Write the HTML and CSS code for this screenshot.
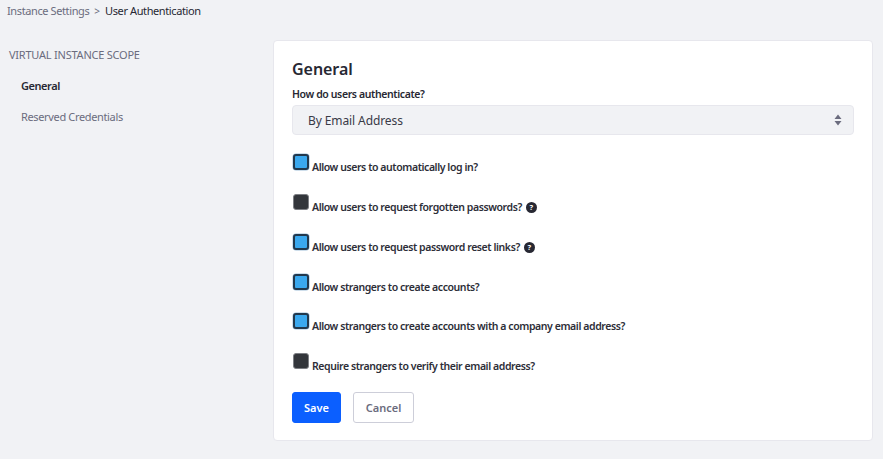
FILE: index.html
```html
<!DOCTYPE html>
<html lang="en">
<head>
<meta charset="utf-8">
<title>User Authentication</title>
<link rel="stylesheet" href="styles.css">
</head>
<body>
<nav class="crumbs"><span class="crumb-link">Instance Settings</span><span class="crumb-sep">&gt;</span><span class="crumb-current">User Authentication</span></nav>
<div class="layout">
  <aside class="side">
    <div class="side-title">VIRTUAL INSTANCE SCOPE</div>
    <a class="side-item active">General</a>
    <a class="side-item">Reserved Credentials</a>
  </aside>
  <main class="card">
    <h1 class="title">General</h1>
    <div class="label">How do users authenticate?</div>
    <div class="select">By Email Address
      <svg class="updown" width="8" height="12" viewBox="0 0 8 12"><path d="M4 0.5 7.5 5H0.5zM0.5 7h7L4 11.5z" fill="#6b6c7e"/></svg>
    </div>
    <div class="rows">
      <div class="row"><span class="box on"></span><span class="text">Allow users to automatically log in?</span></div>
      <div class="row"><span class="box"></span><span class="text">Allow users to request forgotten passwords?</span><span class="help">?</span></div>
      <div class="row"><span class="box on"></span><span class="text">Allow users to request password reset links?</span><span class="help">?</span></div>
      <div class="row"><span class="box on"></span><span class="text">Allow strangers to create accounts?</span></div>
      <div class="row"><span class="box on"></span><span class="text">Allow strangers to create accounts with a company email address?</span></div>
      <div class="row"><span class="box"></span><span class="text">Require strangers to verify their email address?</span></div>
    </div>
    <div class="actions"><button class="btn primary">Save</button><button class="btn secondary">Cancel</button></div>
  </main>
</div>
</body>
</html>
```
FILE: styles.css
```css
* { box-sizing: border-box; }
html, body { height: 100%; }
body { margin: 0; background: #f1f2f5; font-family: "Noto Sans", "Open Sans", sans-serif; color: #272833; overflow: hidden; }
.crumbs { display: flex; align-items: center; height: 21px; padding-left: 7px; font-size: 11px; letter-spacing: -0.39px; }
.crumb-link { color: #6b6c7e; }
.crumb-sep { color: #6b6c7e; margin: 0 5px 0 5px; font-size: 10px; letter-spacing: 0; }
.crumb-current { color: #272833; }
.layout { display: flex; padding: 19px 10px 0 0; }
.side { width: 273px; flex: none; padding: 7px 0 0 9px; font-size: 11px; }
.side-title { color: #6b6c7e; height: 16px; line-height: 16px; letter-spacing: -0.23px; }
.side-item { display: block; height: 31px; line-height: 16px; padding: 15px 0 0 12px; color: #6b6c7e; letter-spacing: -0.35px; }
.side-item.active { color: #272833; font-weight: 600; letter-spacing: -0.45px; }
.card { width: 600px; height: 401px; background: #fff; border: 1px solid #e7e7ed; border-radius: 4px; padding: 18px 18px 0; }
.title { margin: 0; font-size: 16px; line-height: 20px; font-weight: 600; color: #272833; letter-spacing: -0.05px; }
.label { margin-top: 8px; font-size: 10.5px; font-weight: 600; line-height: 15px; letter-spacing: -0.38px; }
.select { display: flex; align-items: center; justify-content: space-between; height: 30px; margin-top: 3px; padding: 0 15px; background: #f1f2f5; border: 1px solid #e7e7ed; border-radius: 4px; font-size: 12px; color: #393a47; letter-spacing: -0.1px; }
.updown { margin-right: -4px; }
.rows { margin-top: 19px; display: flex; flex-direction: column; gap: 23.85px; }
.row { display: flex; align-items: flex-end; height: 16px; font-size: 10.5px; font-weight: 600; line-height: 14px; letter-spacing: -0.42px; color: #2d2e38; }
.box { width: 16px; height: 16px; margin-left: 1px; margin-right: 3px; flex: none; border-radius: 3px; background: #33363b; border: 1px solid #7d7f84; }
.box.on { background: #3aa8ee; border: 2px solid #22384c; box-shadow: 0 0 0 0.5px #9dbdd8; }
.text { position: relative; top: 4px; }
.help { position: relative; top: 3px; margin-left: 4px; width: 11px; height: 11px; border-radius: 50%; background: #272833; color: #fff; font-size: 7.5px; font-weight: 700; line-height: 11px; text-align: center; letter-spacing: 0; }
.actions { display: flex; gap: 12px; margin-top: 23px; }
.btn { height: 31px; border-radius: 3px; font: 600 11px "Noto Sans", sans-serif; padding: 0; }
.primary { width: 49px; background: #0b5fff; border: 1px solid #0b5fff; color: #fff; }
.secondary { width: 61px; background: #fff; border: 1px solid #cdced9; color: #6b6c7e; }
```
